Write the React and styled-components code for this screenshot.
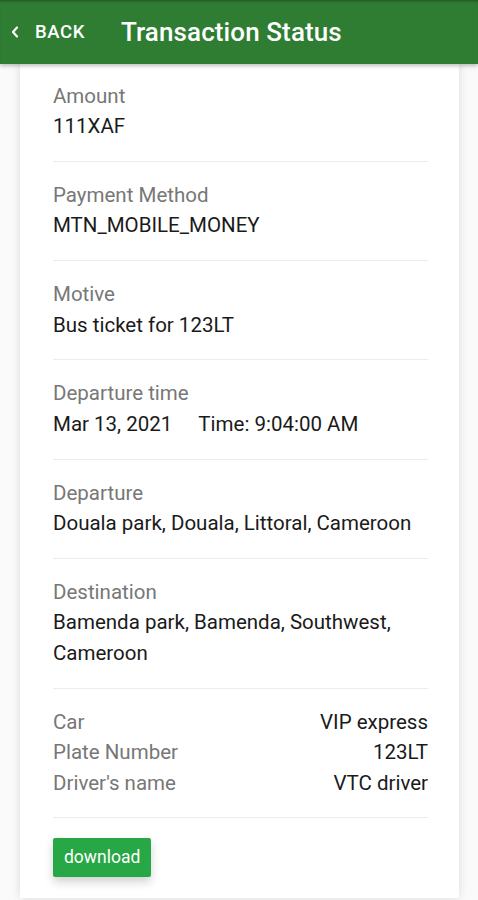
import React from "react";
import styled, { createGlobalStyle } from "styled-components";

const GlobalStyle = createGlobalStyle`
  html, body { margin: 0; padding: 0; background: #fafafa; }
  body { font-family: Roboto, "Noto Sans", "Liberation Sans", sans-serif; }
  * { box-sizing: border-box; }
`;

const Page = styled.div`
  width: 478px;
  min-height: 900px;
  background: #fafafa;
  overflow: hidden;
`;

const Header = styled.header`
  position: relative;
  z-index: 2;
  height: 64px;
  background: #2e7d32;
  display: flex;
  align-items: center;
  color: #fff;
  box-shadow: 0 2px 4px rgba(0, 0, 0, 0.25), inset 0 3px 3px -2px rgba(0, 0, 0, 0.35);
`;

const BackButton = styled.button`
  display: flex;
  align-items: center;
  gap: 15px;
  background: none;
  border: none;
  color: #fff;
  padding: 0 0 0 10px;
  font-family: Roboto, "Liberation Sans", sans-serif;
  font-weight: 500;
  font-size: 18.5px;
  letter-spacing: 0.6px;
  cursor: pointer;
`;

const Title = styled.h1`
  margin: 0 0 0 36px;
  font-size: 26px;
  font-weight: 500;
  letter-spacing: 0.1px;
`;

const Card = styled.main`
  width: 439px;
  margin: 0 0 0 20px;
  background: #fff;
  padding: 0 31px 21px 33px;
  box-shadow: 0 0 9px rgba(0, 0, 0, 0.13);
`;

const Row = styled.section`
  padding: 18px 0 19.25px;
  border-bottom: 1px solid #ececec;
  &:first-child { padding-top: 16.5px; }
`;

const Label = styled.div`
  font-size: 20.5px;
  line-height: 30.5px;
  color: #777;
`;

const Value = styled.div`
  font-size: 20.5px;
  line-height: 30.5px;
  color: #1a1a1a;
`;

const Gap = styled.span`
  margin-left: 26px;
`;

const Pair = styled.div`
  display: flex;
  justify-content: space-between;
  font-size: 20.5px;
  line-height: 30.5px;
`;

const PairLabel = styled.span`
  color: #777;
`;

const PairValue = styled.span`
  color: #1a1a1a;
`;

const Actions = styled.div`
  padding-top: 19.5px;
`;

const DownloadButton = styled.button`
  height: 39px;
  padding: 0 11px;
  background: #27a745;
  color: #fff;
  border: none;
  border-radius: 2px;
  font-family: Roboto, "Liberation Sans", sans-serif;
  font-size: 17.5px;
  box-shadow: 0 5px 10px rgba(0, 0, 0, 0.18);
  cursor: pointer;
`;

const Chevron = () => (
  <svg width="10" height="14" viewBox="0 0 10 14" fill="none">
    <path d="M7 2.5L3 7l4 4.5" stroke="#fff" strokeWidth="2.2" strokeLinecap="round" strokeLinejoin="round" />
  </svg>
);

const rows = [
  { label: "Amount", value: "111XAF" },
  { label: "Payment Method", value: "MTN_MOBILE_MONEY" },
  { label: "Motive", value: "Bus ticket for 123LT" },
  {
    label: "Departure time",
    value: (
      <>
        Mar 13, 2021<Gap>Time: 9:04:00 AM</Gap>
      </>
    ),
  },
  { label: "Departure", value: "Douala park, Douala, Littoral, Cameroon" },
  { label: "Destination", value: "Bamenda park, Bamenda, Southwest, Cameroon" },
];

const pairs = [
  ["Car", "VIP express"],
  ["Plate Number", "123LT"],
  ["Driver's name", "VTC driver"],
];

export default function App() {
  return (
    <Page>
      <GlobalStyle />
      <Header>
        <BackButton>
          <Chevron />
          BACK
        </BackButton>
        <Title>Transaction Status</Title>
      </Header>
      <Card>
        {rows.map((r) => (
          <Row key={r.label}>
            <Label>{r.label}</Label>
            <Value>{r.value}</Value>
          </Row>
        ))}
        <Row>
          {pairs.map(([l, v]) => (
            <Pair key={l}>
              <PairLabel>{l}</PairLabel>
              <PairValue>{v}</PairValue>
            </Pair>
          ))}
        </Row>
        <Actions>
          <DownloadButton>download</DownloadButton>
        </Actions>
      </Card>
    </Page>
  );
}
